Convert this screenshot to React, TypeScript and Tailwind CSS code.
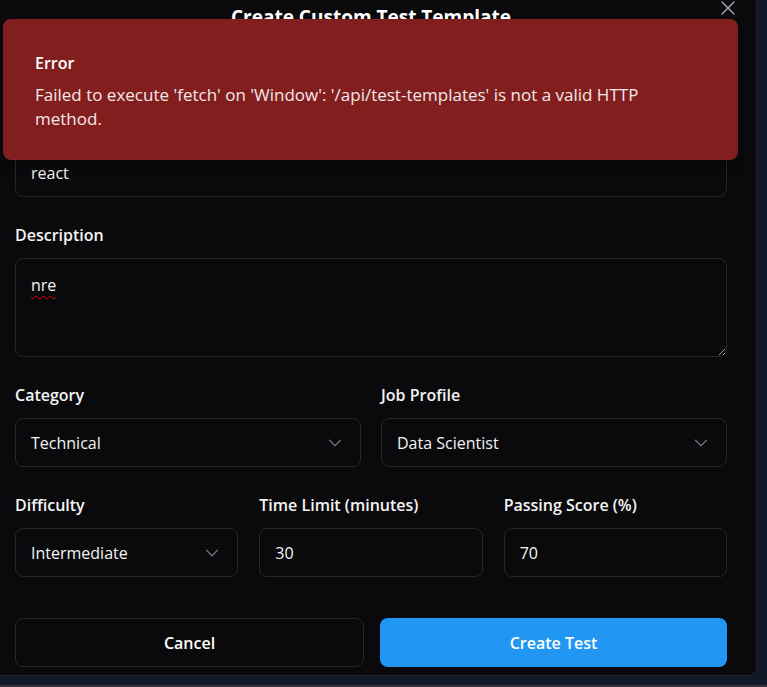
import { X, ChevronDown } from 'lucide-react';

const FONT = { fontFamily: '"Open Sans", "Noto Sans", sans-serif' };

function Label({ children }: { children: React.ReactNode }) {
  return <div className="text-[16px] leading-6 font-semibold text-zinc-100 mb-[11px]">{children}</div>;
}

function Select({ value }: { value: string }) {
  return (
    <div className="h-[49px] flex items-center justify-between pl-[15px] pr-[14px] rounded-lg border border-zinc-800 bg-[#0a0a0c] text-[16px] text-zinc-100">
      <span>{value}</span>
      <ChevronDown size={22} strokeWidth={1.4} className="text-zinc-500" />
    </div>
  );
}

function Input({ value }: { value: string }) {
  return (
    <input
      readOnly
      value={value}
      className="w-full h-[49px] px-[15px] rounded-lg border border-zinc-800 bg-[#0a0a0c] text-[16px] text-zinc-100 outline-none"
    />
  );
}

export default function App() {
  return (
    <div className="w-[767px] h-[687px] bg-[#111827] overflow-hidden relative" style={FONT}>
      <div className="w-[757px] h-[676px] bg-[#0a0a0c] border-r border-b border-[#1f2230] rounded-br-lg pl-[15px] pr-[29px] pt-[3px] relative">
        <div className="text-center text-[19px] leading-7 font-bold text-white">Create Custom Test Template</div>
        <button className="absolute right-[16px] top-[-4px] text-zinc-400">
          <X size={24} strokeWidth={1.5} />
        </button>

        <div className="mt-[82px]">
          <Label>Test Name</Label>
          <Input value="react" />
        </div>

        <div className="mt-[26px]">
          <Label>Description</Label>
          <textarea
            readOnly
            value="nre"
            spellCheck
            className="block w-full h-[99px] px-[15px] pt-[14px] rounded-lg border border-zinc-800 bg-[#0a0a0c] text-[16px] text-zinc-100 outline-none underline decoration-wavy decoration-red-600 decoration-1 underline-offset-4"
          />
        </div>

        <div className="mt-[26px] grid grid-cols-2 gap-5">
          <div>
            <Label>Category</Label>
            <Select value="Technical" />
          </div>
          <div>
            <Label>Job Profile</Label>
            <Select value="Data Scientist" />
          </div>
        </div>

        <div className="mt-[26px] grid grid-cols-3 gap-[21px]">
          <div>
            <Label>Difficulty</Label>
            <Select value="Intermediate" />
          </div>
          <div>
            <Label>Time Limit (minutes)</Label>
            <Input value="30" />
          </div>
          <div>
            <Label>Passing Score (%)</Label>
            <Input value="70" />
          </div>
        </div>

        <div className="mt-[41px] flex gap-4">
          <button className="flex-1 h-[49px] rounded-lg border border-zinc-800 bg-[#0a0a0c] text-[16px] font-semibold text-white">
            Cancel
          </button>
          <button className="flex-1 h-[49px] rounded-lg bg-[#2196f3] text-[16px] font-semibold text-white">
            Create Test
          </button>
        </div>

        <div className="absolute left-[3px] top-[19px] w-[735px] h-[141px] rounded-lg bg-[#821e1e] pl-8 pr-8 pt-8 shadow-lg">
          <div className="text-[16px] leading-6 font-semibold text-white">Error</div>
          <div className="mt-2 text-[17px] leading-6 text-white/90">
            Failed to execute 'fetch' on 'Window': '/api/test-templates' is not a valid HTTP
            <br />
            method.
          </div>
        </div>
      </div>
      <div className="absolute left-0 bottom-0 w-full h-[2px] bg-[#34343c]" />
    </div>
  );
}
